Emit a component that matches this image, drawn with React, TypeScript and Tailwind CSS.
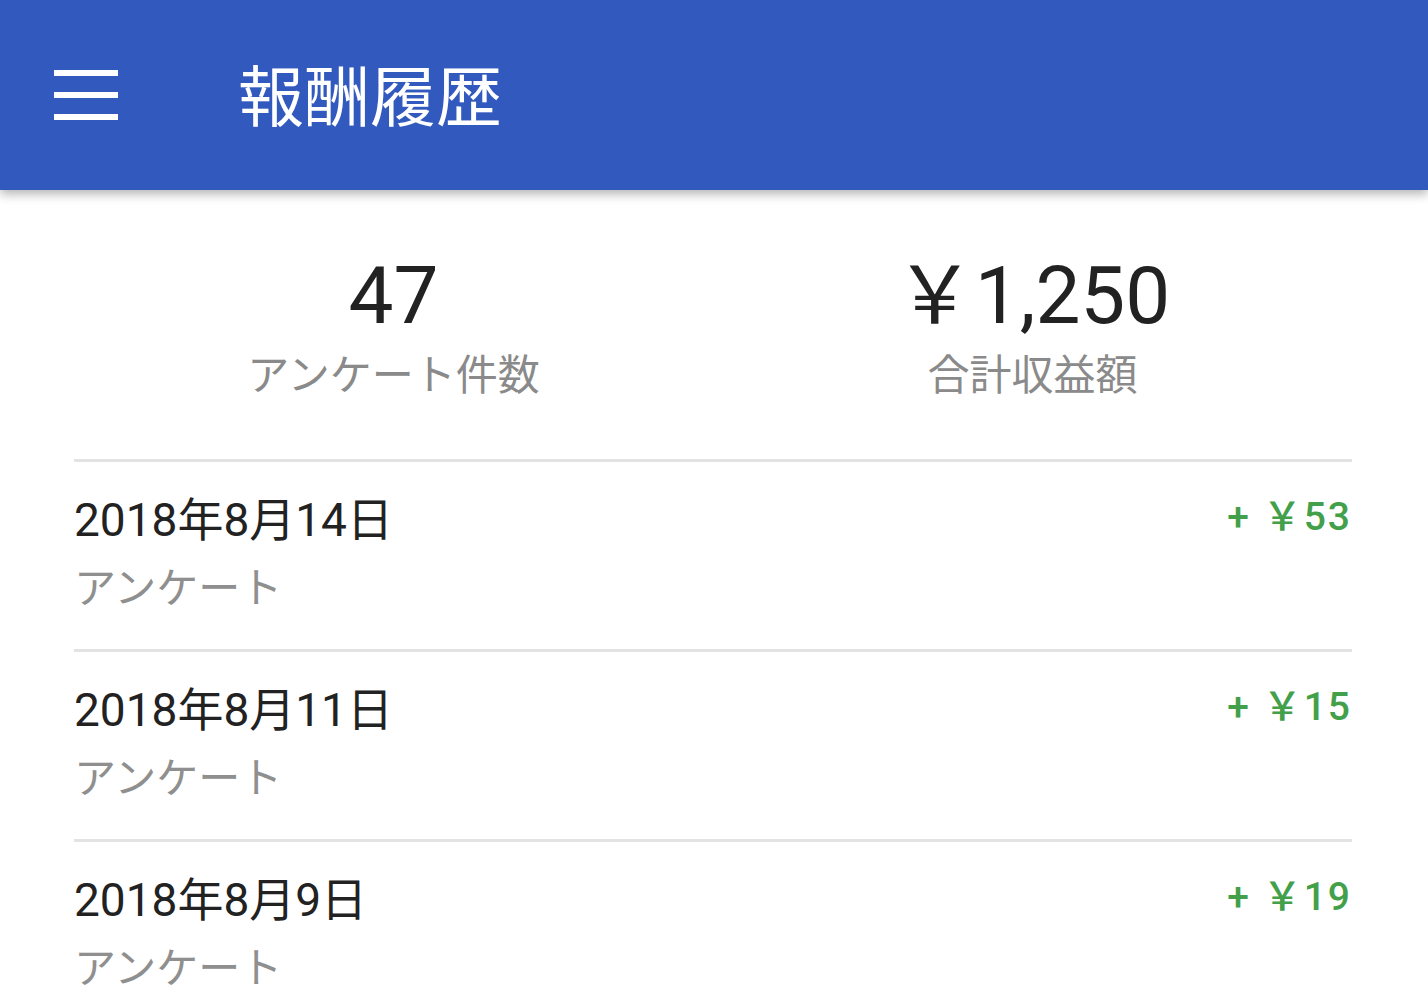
import React from 'react';

const rows = [
  { date: '2018年8月14日', amount: '+ ￥53' },
  { date: '2018年8月11日', amount: '+ ￥15' },
  { date: '2018年8月9日', amount: '+ ￥19' },
];

export default function App() {
  return (
    <div
      className="w-[1428px] h-[1002px] overflow-hidden bg-white"
      style={{ fontFamily: 'Roboto, "Noto Sans CJK JP", sans-serif' }}
    >
      {/* App bar */}
      <header className="relative z-10 h-[190px] bg-[#3259be] flex items-center pb-[6px] shadow-[0_4px_10px_rgba(0,0,0,0.3)]">
        <div className="w-[238px] pl-[54px] pt-[6px]">
          <div className="flex flex-col gap-[16px] w-[64px]">
            <span className="block h-[6px] bg-white" />
            <span className="block h-[6px] bg-white" />
            <span className="block h-[6px] bg-white" />
          </div>
        </div>
        <h1
          className="text-white text-[66px] leading-none font-normal"
          style={{ fontFamily: '"Noto Sans CJK JP", sans-serif' }}
        >
          報酬履歴
        </h1>
      </header>

      <main className="pl-[74px] pr-[76px]">
        {/* Summary */}
        <section className="grid grid-cols-2 pt-[56px] pb-[57px]">
          <div className="flex flex-col items-center">
            <div className="text-[80px] leading-[100px] text-[#222]">47</div>
            <div className="text-[42px] leading-[52px] text-[#8a8a8a] mt-[4px]">アンケート件数</div>
          </div>
          <div className="flex flex-col items-center">
            <div className="text-[80px] leading-[100px] text-[#222]">￥1,250</div>
            <div className="text-[42px] leading-[52px] text-[#8a8a8a] mt-[4px]">合計収益額</div>
          </div>
        </section>

        {/* History */}
        <ul>
          {rows.map((r) => (
            <li key={r.date} className="border-t-[3px] border-[#e3e3e3] h-[190px] flex justify-between pt-[28px]">
              <div className="flex flex-col">
                <span className="text-[46px] leading-[60px] text-[#222]">{r.date}</span>
                <span className="text-[42px] leading-[60px] text-[#8f8f8f] mt-[9px]">アンケート</span>
              </div>
              <span className="text-[39px] leading-[54px] font-medium tracking-[2px] text-[#43a04a]">{r.amount}</span>
            </li>
          ))}
        </ul>
      </main>
    </div>
  );
}
